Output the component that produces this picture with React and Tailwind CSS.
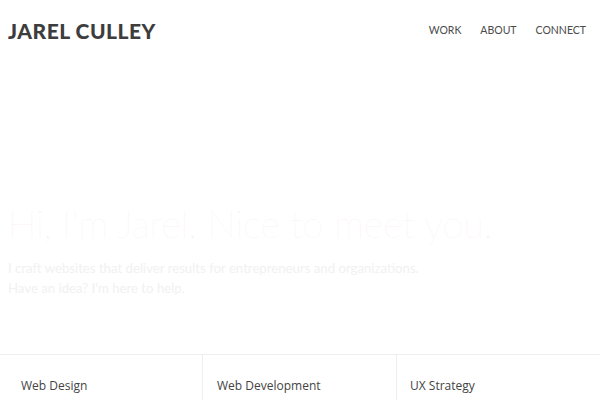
export default function App() {
  return (
    <div className="w-[600px] h-[400px] overflow-hidden bg-white relative" style={{ fontFamily: "Lato, sans-serif" }}>
      <header className="flex items-center justify-between h-[60px] pl-[8px] pr-[14px]">
        <div className="text-[21px] font-black tracking-[0.5px] text-[#3d3d3d] leading-none">
          JAREL CULLEY
        </div>
        <nav className="flex gap-[19px] pt-[2px] text-[10.5px] text-[#4a4a4a]">
          <span>WORK</span>
          <span>ABOUT</span>
          <span>CONNECT</span>
        </nav>
      </header>
      <section className="pl-[8px] pt-[140px] h-[294px]">
        <h1 className="text-[38px] font-thin text-[#fbf3f3] leading-[46px] tracking-[-0.2px]">
          Hi, I'm Jarel. Nice to meet you.
        </h1>
        <p className="mt-[12px] text-[13.2px] text-[#f1f1f1] leading-[20px]">
          I craft websites that deliver results for entrepreneurs and organizations.
          <br />
          Have an idea? I'm here to help.
        </p>
      </section>
      <div className="grid grid-cols-[202px_194px_1fr] border-t border-[#eeeeee] h-[46px]" style={{ fontFamily: "'Open Sans', sans-serif" }}>
        <div className="pl-[21px] pt-[22px] text-[12px] text-[#444]">Web Design</div>
        <div className="pl-[14px] pt-[22px] text-[12px] text-[#444] border-l border-[#eeeeee]">Web Development</div>
        <div className="pl-[13px] pt-[22px] text-[12px] text-[#444] border-l border-[#eeeeee]">UX Strategy</div>
      </div>
    </div>
  );
}
